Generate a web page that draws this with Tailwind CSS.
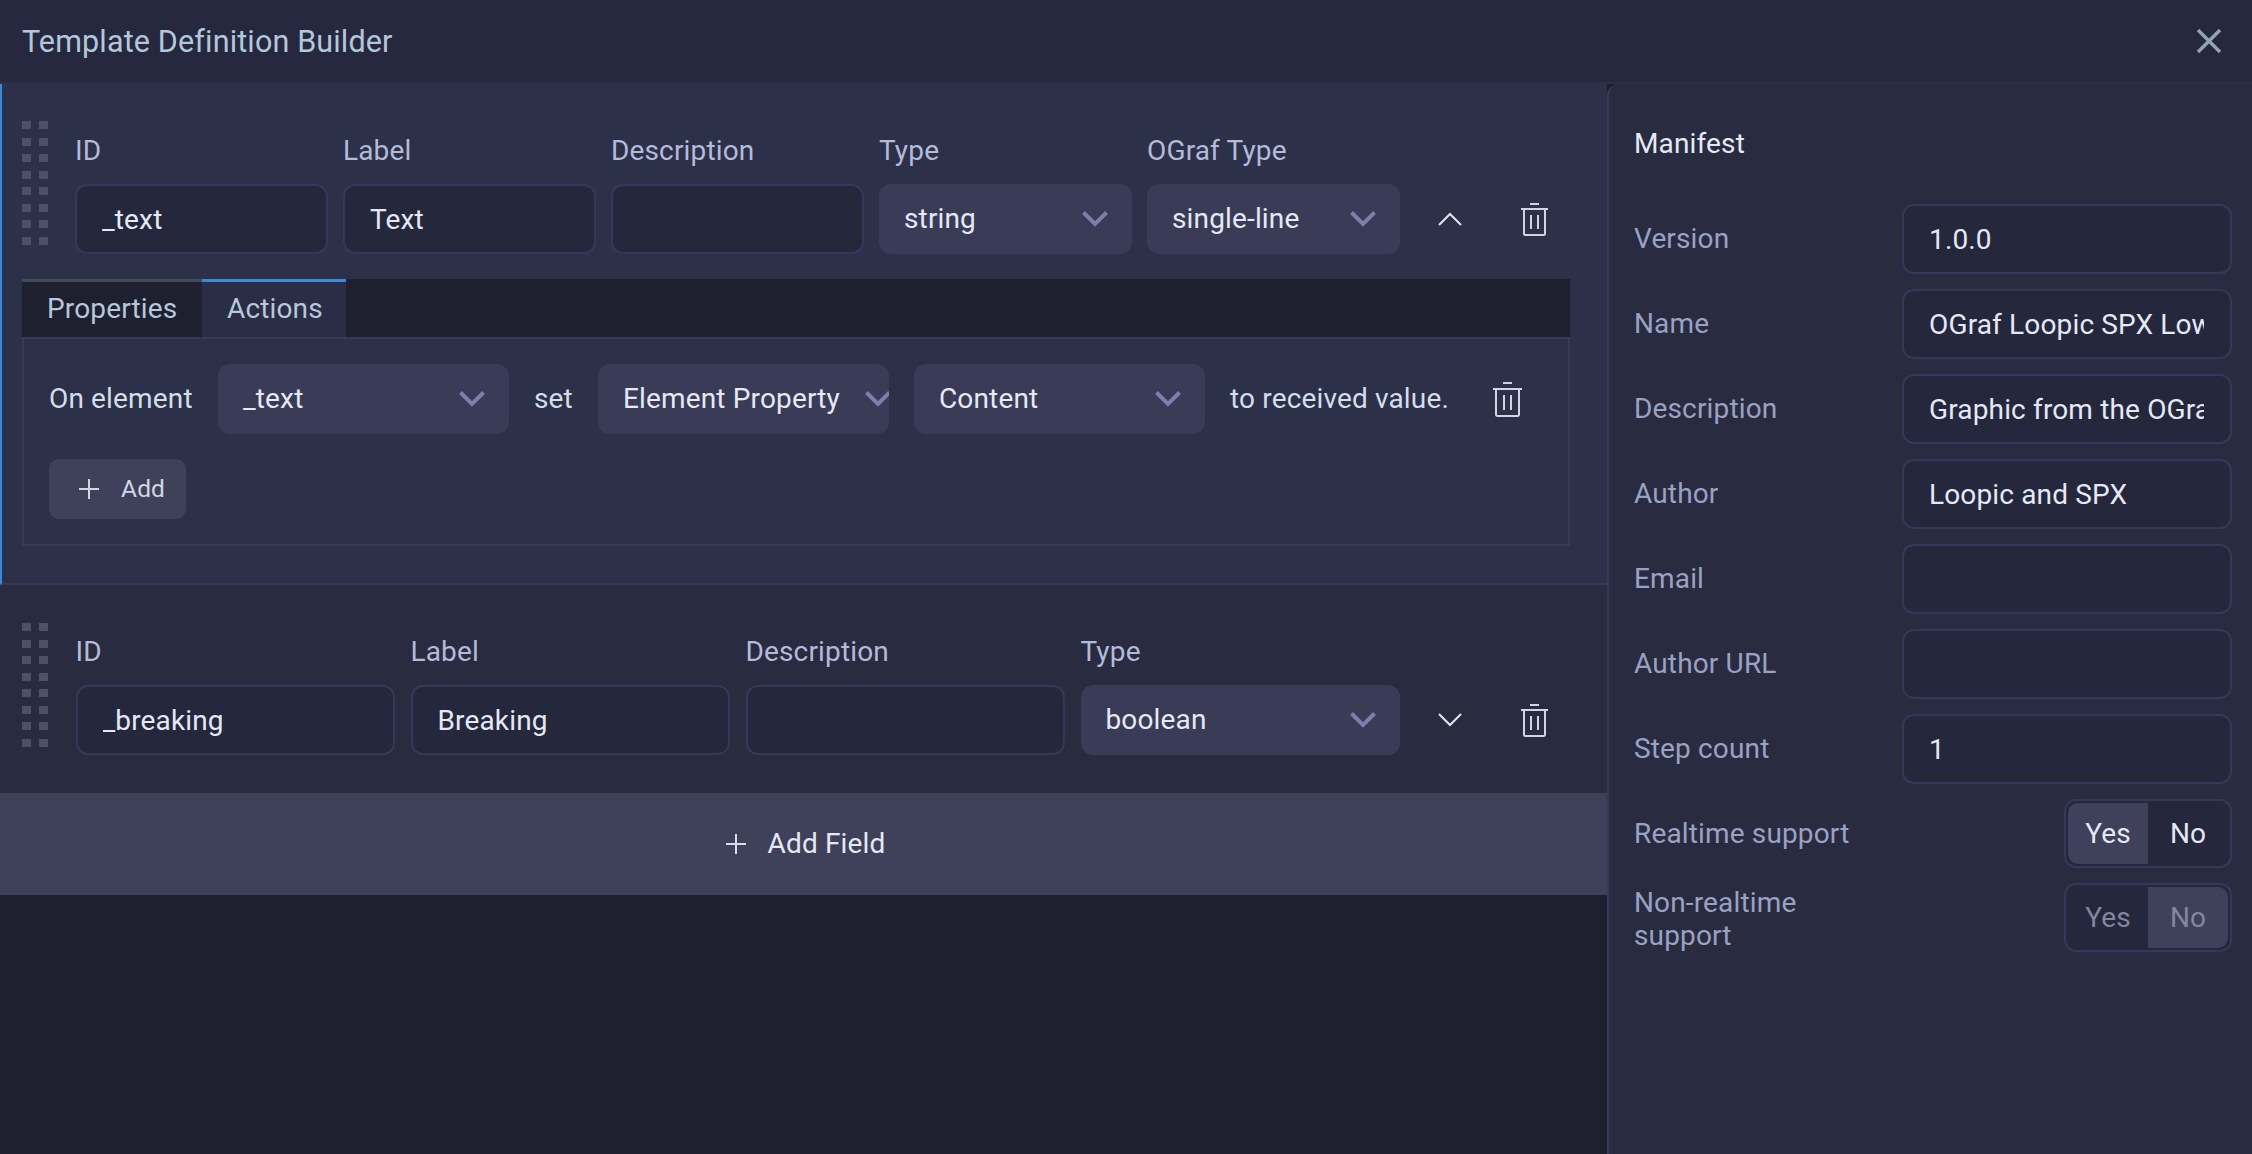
<!DOCTYPE html>
<html lang="en">
<head>
  <meta charset="UTF-8" />
  <title>Template Definition Builder</title>
  <script src="https://cdn.jsdelivr.net/npm/@tailwindcss/browser@4"></script>
</head>
<body class="h-screen overflow-hidden flex flex-col bg-[#1e2030] font-[Roboto,sans-serif] text-[28px] tracking-[0.15px] text-[#e4e9f5]">

  <!-- header -->
  <div class="h-[84px] shrink-0 flex items-center justify-between pl-[22px] pr-[30px] bg-[#25283e] border-b-2 border-[#2c2f48]">
    <h1 class="text-[30.5px] pt-[2px] text-[#b3c7da]">Template Definition Builder</h1>
    <svg class="w-[26px] h-[26px]" viewBox="0 0 26 26" fill="none" stroke="#93a4b0" stroke-width="3.4"><path d="M2 2l22 22M24 2L2 24"/></svg>
  </div>

  <div class="flex flex-1 min-h-0">
    <div class="w-[1607px] shrink-0">

      <!-- first field, opened -->
      <div class="bg-[#2c3048] border-l-2 border-l-[#3b8ad6] border-b-2 border-b-[#35395a] pl-[20px] pr-[37px] pt-[37px] pb-[37px]">
        <div class="flex">
          <div class="w-[53px] shrink-0 grid grid-cols-[8.5px_8.5px] gap-x-[8.5px] gap-y-[8.5px] content-start">
            <i class="h-[8px] bg-[#4c5167]"></i><i class="h-[8px] bg-[#4c5167]"></i><i class="h-[8px] bg-[#4c5167]"></i><i class="h-[8px] bg-[#4c5167]"></i>
            <i class="h-[8px] bg-[#4c5167]"></i><i class="h-[8px] bg-[#4c5167]"></i><i class="h-[8px] bg-[#4c5167]"></i><i class="h-[8px] bg-[#4c5167]"></i>
            <i class="h-[8px] bg-[#4c5167]"></i><i class="h-[8px] bg-[#4c5167]"></i><i class="h-[8px] bg-[#4c5167]"></i><i class="h-[8px] bg-[#4c5167]"></i>
            <i class="h-[8px] bg-[#4c5167]"></i><i class="h-[8px] bg-[#4c5167]"></i><i class="h-[8px] bg-[#4c5167]"></i><i class="h-[8px] bg-[#4c5167]"></i>
          </div>
          <div class="flex gap-[15px] pt-[12px]">
            <div class="w-[253px]">
              <div class="h-[34px] leading-[35px] mb-[17px] text-[#b4bada]">ID</div>
              <input value="_text" class="w-full h-[70px] pl-[25px] pr-[26px] rounded-[12px] bg-[#25273c] border-2 border-[#35385a]" />
            </div>
            <div class="w-[253px]">
              <div class="h-[34px] leading-[35px] mb-[17px] text-[#b4bada]">Label</div>
              <input value="Text" class="w-full h-[70px] pl-[25px] pr-[26px] rounded-[12px] bg-[#25273c] border-2 border-[#35385a]" />
            </div>
            <div class="w-[253px]">
              <div class="h-[34px] leading-[35px] mb-[17px] text-[#b4bada]">Description</div>
              <input class="w-full h-[70px] pl-[25px] pr-[26px] rounded-[12px] bg-[#25273c] border-2 border-[#35385a]" />
            </div>
            <div class="w-[253px]">
              <div class="h-[34px] leading-[35px] mb-[17px] text-[#b4bada]">Type</div>
              <div class="h-[70px] pl-[25px] pr-[24px] rounded-[12px] bg-[#393b57] flex items-center justify-between">
                <span>string</span>
                <svg class="w-[26px] h-[16px]" viewBox="0 0 26 16" fill="none" stroke="#7d7fab" stroke-width="4"><path d="M1.500 1.500L13 13 24.500 1.500"/></svg>
              </div>
            </div>
            <div class="w-[253px]">
              <div class="h-[34px] leading-[35px] mb-[17px] text-[#b4bada]">OGraf Type</div>
              <div class="h-[70px] pl-[25px] pr-[24px] rounded-[12px] bg-[#393b57] flex items-center justify-between">
                <span>single-line</span>
                <svg class="w-[26px] h-[16px]" viewBox="0 0 26 16" fill="none" stroke="#7d7fab" stroke-width="4"><path d="M1.500 1.500L13 13 24.500 1.500"/></svg>
              </div>
            </div>
          </div>
          <div class="self-end h-[70px] flex items-center">
            <svg class="ml-[38px] w-[24px] h-[14px]" viewBox="0 0 24 14" fill="none" stroke="#e0e6f0" stroke-width="2"><path d="M1 13L12 2l11 11"/></svg>
            <svg class="ml-[59px] w-[27px] h-[33px]" viewBox="0 0 27 33" fill="none" stroke="#cdd6e4" stroke-width="2"><path d="M9 1h9M0 6h27M3 6v24.500a1.500 1.500 0 0 0 1.500 1.500h18a1.500 1.500 0 0 0 1.500-1.500V6M10 12v14M17 12v14"/></svg>
          </div>
        </div>

        <!-- tabs -->
        <div class="mt-[25px] h-[58px] flex bg-[#1e2030]">
          <div class="w-[180px] border-t-[3px] border-[#3f4a5a] pl-[25px] leading-[53px] text-[#b6c8d9]">Properties</div>
          <div class="w-[144px] border-t-[3px] border-[#3b8ad6] bg-[#2a2d45] pl-[25px] leading-[53px] text-[#b6c8d9]">Actions</div>
        </div>
        <div class="border-2 border-[#35395a] p-[25px]">
          <div class="flex items-center h-[70px] text-[#d3deea]">
            <span class="w-[169px] shrink-0">On element</span>
            <div class="w-[291px] h-[70px] shrink-0 pl-[25px] pr-[24px] rounded-[12px] bg-[#393b57] text-[#e4e9f5] flex items-center justify-between">
              <span>_text</span>
              <svg class="w-[26px] h-[16px]" viewBox="0 0 26 16" fill="none" stroke="#7d7fab" stroke-width="4"><path d="M1.500 1.500L13 13 24.500 1.500"/></svg>
            </div>
            <span class="w-[89px] shrink-0 pl-[25px]">set</span>
            <div class="w-[291px] h-[70px] shrink-0 pl-[25px] rounded-[12px] bg-[#393b57] text-[#e4e9f5] flex items-center overflow-hidden">
              <span class="w-[242px] shrink-0 whitespace-nowrap">Element Property</span>
              <svg class="w-[26px] h-[16px] shrink-0" viewBox="0 0 26 16" fill="none" stroke="#7d7fab" stroke-width="4"><path d="M1.500 1.500L13 13 24.500 1.500"/></svg>
            </div>
            <div class="ml-[25px] w-[291px] h-[70px] shrink-0 pl-[25px] pr-[24px] rounded-[12px] bg-[#393b57] text-[#e4e9f5] flex items-center justify-between">
              <span>Content</span>
              <svg class="w-[26px] h-[16px]" viewBox="0 0 26 16" fill="none" stroke="#7d7fab" stroke-width="4"><path d="M1.500 1.500L13 13 24.500 1.500"/></svg>
            </div>
            <span class="ml-[25px] w-[263px] shrink-0">to received value.</span>
            <svg class="w-[29px] h-[35px]" viewBox="0 0 29 35" fill="none" stroke="#cdd6e4" stroke-width="2"><path d="M10 1h9M0 7h29M3 7v26a1.500 1.500 0 0 0 1.500 1h20a1.500 1.500 0 0 0 1.500-1V7M11 13v15M18 13v15"/></svg>
          </div>
          <div class="mt-[25px] w-[137px] h-[60px] rounded-[10px] bg-[#3f4059] flex items-center pl-[30px] gap-[22px] text-[24.5px] text-[#cfd9e6]">
            <svg class="w-[20px] h-[20px]" viewBox="0 0 20 20" fill="none" stroke="#cfd9e6" stroke-width="2"><path d="M10 0v20M0 10h20"/></svg>
            <span>Add</span>
          </div>
        </div>
      </div>

      <!-- second field, closed -->
      <div class="bg-[#292b40] pl-[22px] pr-[37px] pt-[38px] pb-[38px] flex">
        <div class="w-[53.5px] shrink-0 grid grid-cols-[8.5px_8.5px] gap-x-[8.5px] gap-y-[8.5px] content-start">
          <i class="h-[8px] bg-[#4c5167]"></i><i class="h-[8px] bg-[#4c5167]"></i><i class="h-[8px] bg-[#4c5167]"></i><i class="h-[8px] bg-[#4c5167]"></i>
          <i class="h-[8px] bg-[#4c5167]"></i><i class="h-[8px] bg-[#4c5167]"></i><i class="h-[8px] bg-[#4c5167]"></i><i class="h-[8px] bg-[#4c5167]"></i>
          <i class="h-[8px] bg-[#4c5167]"></i><i class="h-[8px] bg-[#4c5167]"></i><i class="h-[8px] bg-[#4c5167]"></i><i class="h-[8px] bg-[#4c5167]"></i>
          <i class="h-[8px] bg-[#4c5167]"></i><i class="h-[8px] bg-[#4c5167]"></i><i class="h-[8px] bg-[#4c5167]"></i><i class="h-[8px] bg-[#4c5167]"></i>
        </div>
        <div class="flex gap-[16px] pt-[11px]">
          <div class="w-[319px]">
            <div class="h-[34px] leading-[35px] mb-[17px] text-[#b4bada]">ID</div>
            <input value="_breaking" class="w-full h-[70px] pl-[25px] pr-[26px] rounded-[12px] bg-[#25273c] border-2 border-[#35385a]" />
          </div>
          <div class="w-[319px]">
            <div class="h-[34px] leading-[35px] mb-[17px] text-[#b4bada]">Label</div>
            <input value="Breaking" class="w-full h-[70px] pl-[25px] pr-[26px] rounded-[12px] bg-[#25273c] border-2 border-[#35385a]" />
          </div>
          <div class="w-[319px]">
            <div class="h-[34px] leading-[35px] mb-[17px] text-[#b4bada]">Description</div>
            <input class="w-full h-[70px] pl-[25px] pr-[26px] rounded-[12px] bg-[#25273c] border-2 border-[#35385a]" />
          </div>
          <div class="w-[319px]">
            <div class="h-[34px] leading-[35px] mb-[17px] text-[#b4bada]">Type</div>
            <div class="h-[70px] pl-[25px] pr-[24px] rounded-[12px] bg-[#393b57] flex items-center justify-between">
              <span>boolean</span>
              <svg class="w-[26px] h-[16px]" viewBox="0 0 26 16" fill="none" stroke="#7d7fab" stroke-width="4"><path d="M1.500 1.500L13 13 24.500 1.500"/></svg>
            </div>
          </div>
        </div>
        <div class="self-end h-[70px] flex items-center">
          <svg class="ml-[38.5px] w-[24px] h-[14px]" viewBox="0 0 24 14" fill="none" stroke="#e0e6f0" stroke-width="2"><path d="M1 1l11 11L23 1"/></svg>
          <svg class="ml-[59px] w-[27px] h-[33px]" viewBox="0 0 27 33" fill="none" stroke="#cdd6e4" stroke-width="2"><path d="M9 1h9M0 6h27M3 6v24.500a1.500 1.500 0 0 0 1.500 1.500h18a1.500 1.500 0 0 0 1.500-1.500V6M10 12v14M17 12v14"/></svg>
        </div>
      </div>

      <!-- add field -->
      <div class="h-[102px] bg-[#3f4059] flex items-center justify-center gap-[22px] pl-[4px]">
        <svg class="w-[20px] h-[20px]" viewBox="0 0 20 20" fill="none" stroke="#d8e0ec" stroke-width="2"><path d="M10 0v20M0 10h20"/></svg>
        <span>Add Field</span>
      </div>
    </div>

    <!-- manifest -->
    <div class="flex-1 bg-[#292b40] border-l-2 border-l-[#35395a] rounded-tl-[12px] pl-[25px] pr-[20px]">
      <div class="h-[120px] flex items-center">Manifest</div>
      <div class="flex flex-col gap-[15px] text-[#9aa2c3]">
        <div class="flex items-center justify-between"><span>Version</span><input value="1.0.0" class="w-[330px] h-[70px] pl-[25px] pr-[26px] rounded-[12px] text-[#e4e9f5] bg-[#25273c] border-2 border-[#35385a]" /></div>
        <div class="flex items-center justify-between"><span>Name</span><input value="OGraf Loopic SPX Lower Third" class="w-[330px] h-[70px] pl-[25px] pr-[26px] rounded-[12px] text-[#e4e9f5] bg-[#25273c] border-2 border-[#35385a]" /></div>
        <div class="flex items-center justify-between"><span>Description</span><input value="Graphic from the OGraf examples" class="w-[330px] h-[70px] pl-[25px] pr-[26px] rounded-[12px] text-[#e4e9f5] bg-[#25273c] border-2 border-[#35385a]" /></div>
        <div class="flex items-center justify-between"><span>Author</span><input value="Loopic and SPX" class="w-[330px] h-[70px] pl-[25px] pr-[26px] rounded-[12px] text-[#e4e9f5] bg-[#25273c] border-2 border-[#35385a]" /></div>
        <div class="flex items-center justify-between"><span>Email</span><input class="w-[330px] h-[70px] pl-[25px] pr-[26px] rounded-[12px] text-[#e4e9f5] bg-[#25273c] border-2 border-[#35385a]" /></div>
        <div class="flex items-center justify-between"><span>Author URL</span><input class="w-[330px] h-[70px] pl-[25px] pr-[26px] rounded-[12px] text-[#e4e9f5] bg-[#25273c] border-2 border-[#35385a]" /></div>
        <div class="flex items-center justify-between"><span>Step count</span><input value="1" class="w-[330px] h-[70px] pl-[25px] pr-[26px] rounded-[12px] text-[#e4e9f5] bg-[#25273c] border-2 border-[#35385a]" /></div>
        <div class="flex items-center justify-between">
          <span>Realtime support</span>
          <div class="w-[168px] h-[69px] p-[2px] flex rounded-[12px] bg-[#25273c] border-2 border-[#35385a] text-[#e4e9f5]">
            <span class="w-[80px] rounded-l-[10px] bg-[#3f4059] flex items-center justify-center">Yes</span>
            <span class="w-[80px] flex items-center justify-center">No</span>
          </div>
        </div>
        <div class="flex items-center justify-between">
          <span class="w-[240px] pt-[2px] leading-[33px]">Non-realtime support</span>
          <div class="w-[168px] h-[69px] p-[2px] flex rounded-[12px] bg-[#25273c] border-2 border-[#35385a] text-[#82869f]">
            <span class="w-[80px] flex items-center justify-center">Yes</span>
            <span class="w-[80px] rounded-r-[10px] bg-[#3f4059] flex items-center justify-center">No</span>
          </div>
        </div>
      </div>
    </div>
  </div>
</body>
</html>
